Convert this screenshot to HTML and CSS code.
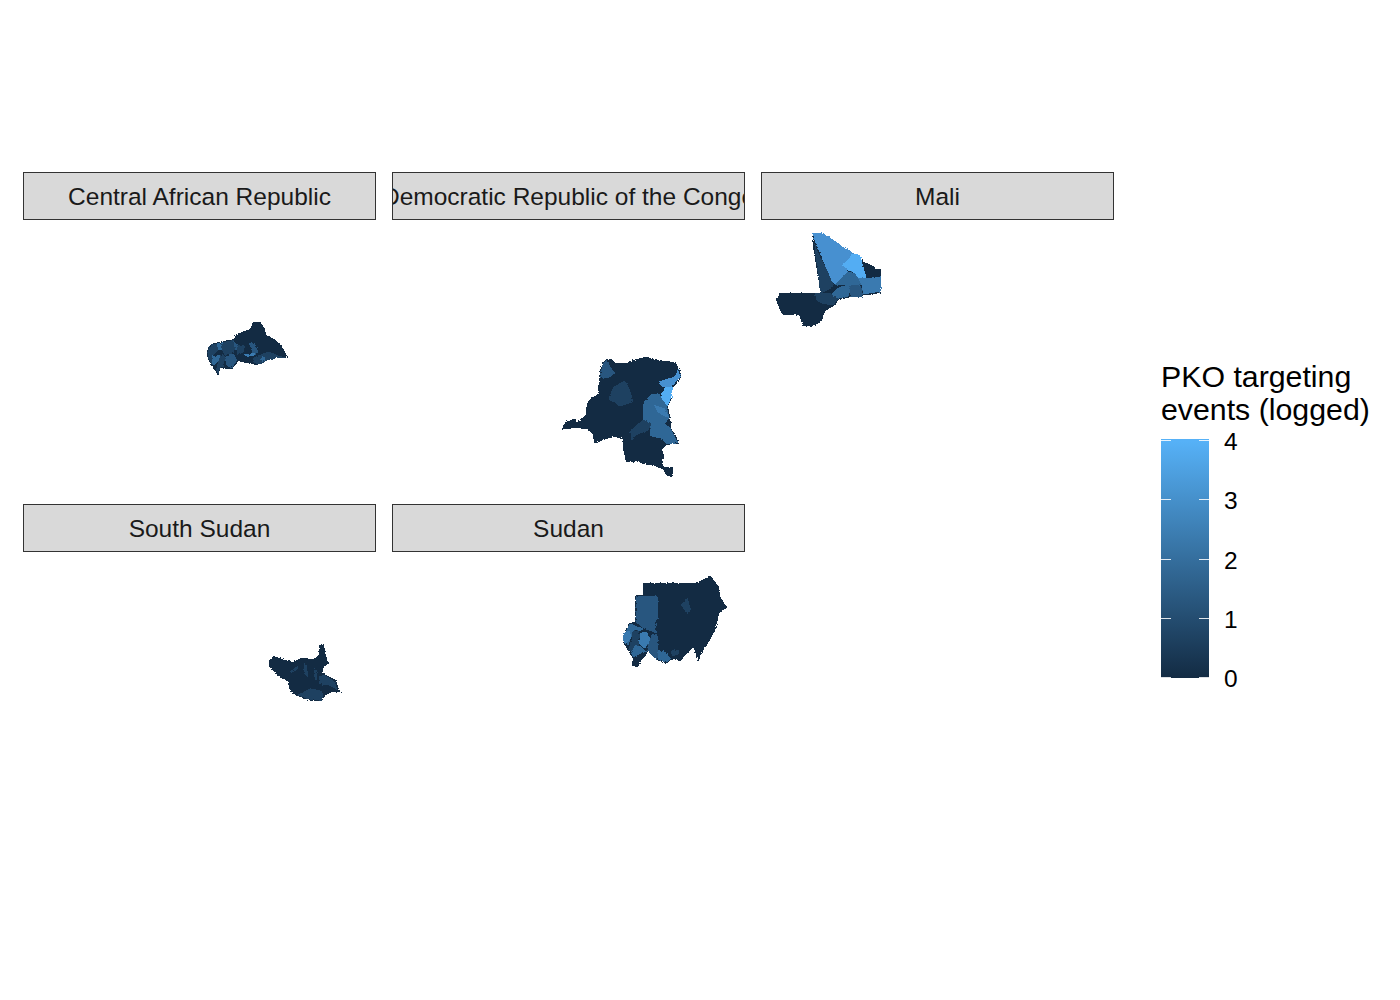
FILE: index.html
```html
<!DOCTYPE html>
<html lang="en">
<head>
<meta charset="utf-8">
<title>PKO targeting events</title>
<link rel="stylesheet" href="styles.css">
</head>
<body>
<svg class="defs" aria-hidden="true"><defs>
<filter id="rough" color-interpolation-filters="sRGB" x="-5%" y="-5%" width="110%" height="110%">
<feTurbulence type="fractalNoise" baseFrequency="0.3" numOctaves="1" seed="4" result="n"/>
<feDisplacementMap in="SourceGraphic" in2="n" scale="9" xChannelSelector="R" yChannelSelector="G"/>
</filter>
</defs></svg>
<main class="plot">
<section class="facets">

<figure class="facet">
<figcaption class="strip"><span>Central African Republic</span></figcaption>
<svg class="panel" viewBox="-531 -285 1059 804"><g class="map">
<polygon class="v0" points="20,112 30,88 60,80 103,72 108,58 150,42 160,22 182,22 194,42 200,60 228,76 248,98 266,130 232,128 205,135 170,150 145,145 115,139 97,162 60,160 55,184 48,170 33,152 23,130"/>
<polygon class="v1" points="22,112 32,88 50,86 55,105 35,125 38,152 25,130"/>
<polygon class="v2" points="50,86 68,82 65,105 55,105"/>
<polygon class="v1" points="68,82 100,75 108,90 100,115 75,120 65,105"/>
<polygon class="v1b" points="100,78 112,88 128,100 115,108 105,105"/>
<polygon class="v2" points="35,125 60,120 62,135 42,150 38,150"/>
<polygon class="v1b" points="75,125 100,115 112,135 95,160 78,150"/>
<polygon class="v1" points="60,120 75,120 72,155 60,158 55,180 48,165"/>
<polygon class="v1b" points="148,85 165,85 175,112 162,118 155,105"/>
<polygon class="v2b" points="132,118 165,114 165,121 140,126"/>
<polygon class="v1" points="165,125 205,110 262,130 230,130 205,135 172,150 160,140"/>
<polygon class="v2" points="180,130 195,125 195,138 180,140"/>
<polygon class="v1" points="112,90 135,92 130,112 112,120"/>
</g></svg>
</figure>

<figure class="facet">
<figcaption class="strip"><span>Democratic Republic of the Congo</span></figcaption>
<svg class="panel" viewBox="-474 -390 1059 804"><g class="map">
<polygon class="v0" points="36,238 45,215 60,213 65,206 78,206 80,220 90,208 108,195 110,165 120,146 145,132 146,85 156,40 170,26 182,26 197,40 232,40 240,33 285,20 330,30 367,36 382,43 385,73 388,53 394,80 377,105 367,115 367,140 354,170 360,200 364,235 377,255 387,282 352,284 337,297 342,320 337,340 342,350 370,353 370,380 350,377 338,357 310,347 280,342 260,334 228,337 220,300 218,267 190,260 170,267 133,280 128,252 113,237 80,234"/>
<polygon class="v1b" points="148,85 158,40 170,32 195,70 175,85"/>
<polygon class="v1" points="175,145 190,110 225,92 240,120 250,155 210,170 190,155"/>
<polygon class="v4" points="325,155 345,110 365,110 365,140 352,170"/>
<polygon class="v3" points="325,95 375,78 385,55 392,80 365,110 335,110"/>
<polygon class="v2" points="278,165 300,135 325,130 352,170 358,205 345,220 300,218 278,210"/>
<polygon class="v2b" points="312,165 345,175 358,205 325,190"/>
<polygon class="v2" points="300,218 345,220 362,235 385,280 350,282 330,265 300,258"/>
<polygon class="v1" points="240,245 260,225 278,210 300,218 298,240 260,255 245,272"/>
</g></svg>
</figure>

<figure class="facet">
<figcaption class="strip"><span>Mali</span></figcaption>
<svg class="panel" viewBox="3 -15 1059 804"><g class="map">
<polygon class="v0" points="158,25 190,25 280,85 300,90 310,110 340,123 345,133 364,133 364,202 345,207 310,210 305,217 270,217 237,224 222,242 197,257 182,292 155,305 128,302 118,272 108,268 68,270 53,240 48,222 60,203 180,203 178,180 160,70"/>
<polygon class="v3" points="158,25 190,25 280,85 250,120 265,140 225,180 215,170 165,50"/>
<polygon class="v1" points="162,55 222,180 212,190 195,200 180,200 178,180"/>
<polygon class="v4" points="280,85 300,90 310,125 320,160 295,160 285,145 265,138 248,120"/>
<polygon class="v2b" points="295,160 320,160 362,155 362,200 310,208 305,180"/>
<polygon class="v2" points="265,140 285,145 295,160 305,180 270,182 245,180 225,180"/>
<polygon class="v1b" points="270,182 300,178 310,208 305,215 270,215"/>
<polygon class="v2" points="225,195 245,182 270,182 268,212 235,222 212,212"/>
<polygon class="v1" points="165,205 210,205 235,222 220,240 190,238 170,228"/>
<polygon class="v0" points="212,190 228,182 225,198 212,200"/>
</g></svg>
</figure>

<figure class="facet">
<figcaption class="strip"><span>South Sudan</span></figcaption>
<svg class="panel" viewBox="-711 -264 1059 804"><g class="map">
<polygon class="v0" points="28,62 40,48 70,58 95,66 125,53 160,58 176,46 178,16 192,13 197,45 207,70 190,82 190,100 227,120 237,148 247,156 215,157 195,167 185,184 150,182 110,167 90,154 83,125 53,107 28,80"/>
<polygon class="v1" points="178,108 195,105 225,125 232,150 205,135 178,133"/>
<polygon class="v1" points="110,165 150,145 185,152 190,170 185,182 150,180"/>
<polygon class="v1" points="130,72 140,75 145,112 135,105"/>
<polygon class="v1" points="90,95 112,78 115,85 95,98"/>
<polygon class="v1" points="162,82 170,90 170,120 162,110"/>
</g></svg>
</figure>

<figure class="facet">
<figcaption class="strip"><span>Sudan</span></figcaption>
<svg class="panel" viewBox="-669 -54 1059 804"><g class="map">
<polygon class="v0" points="84,38 238,38 255,36 285,16 312,50 317,85 337,112 312,130 302,175 282,215 257,255 250,277 235,232 215,252 195,274 175,267 155,280 130,272 100,247 82,267 68,292 51,287 53,265 38,240 23,215 28,190 43,158 61,156 61,76 84,76"/>
<polygon class="v1b" points="63,78 128,78 130,145 122,150 125,190 85,175 63,158"/>
<polygon class="v1" points="198,105 218,85 228,120 215,130"/>
<polygon class="v2" points="45,160 85,175 75,185 60,180 48,205 40,225 25,215 30,190"/>
<polygon class="v1" points="50,185 72,182 75,205 50,210"/>
<polygon class="v1" points="48,210 70,205 72,225 55,250 40,240"/>
<polygon class="v2b" points="25,190 45,180 48,205 35,220 25,215"/>
<polygon class="v2b" points="75,190 95,185 108,210 100,225 85,235 72,222"/>
<polygon class="v2" points="60,225 75,228 95,245 80,250 55,262 48,250"/>
<polygon class="v1b" points="110,192 128,192 128,240 135,270 115,262 100,245 100,225"/>
<polygon class="v2" points="128,240 150,245 168,265 155,278 130,270"/>
<polygon class="v1" points="165,242 192,240 190,255 172,258"/>
</g></svg>
</figure>

</section>
<aside class="legend">
<h2 class="legend-title">PKO targeting<br>events (logged)</h2>
<div class="scale">
<div class="bar">
<div class="ticks"><i></i><i></i><i></i><i></i><i></i></div>
</div>
<div class="labels"><span>4</span><span>3</span><span>2</span><span>1</span><span>0</span></div>
</div>
</aside>
</main>
</body>
</html>
```
FILE: styles.css
```css
html, body { margin: 0; background: #fff; }
body { font-family: "Liberation Sans", Arial, sans-serif; }
.defs { display: block; width: 0; height: 0; }
.plot { display: flex; width: 1400px; height: 1000px; padding: 172px 0 0 23px; box-sizing: border-box; }
.facets { display: grid; grid-template-columns: repeat(3, 353px); column-gap: 16px; row-gap: 16px; align-content: start; }
.facet { margin: 0; }
.strip { display: flex; justify-content: center; align-items: center; box-sizing: border-box; height: 48px; padding-top: 2px; background: #d9d9d9; border: 1px solid #333; color: #1a1a1a; font-size: 24.5px; white-space: nowrap; overflow: hidden; }
.strip span { flex: none; }
.panel { display: block; width: 353px; height: 268px; }
.map { filter: url(#rough); shape-rendering: crispEdges; }
.v0 { fill: #132b43; }
.v1 { fill: #1e4161; }
.v1b { fill: #28567f; }
.v2 { fill: #2f6796; }
.v2b { fill: #3a7ab0; }
.v3 { fill: #4790d0; }
.v4 { fill: #53adf3; }
.legend { margin-left: 47px; padding-top: 188px; }
.legend-title { margin: 0 0 13px; font-size: 30.3px; font-weight: 400; line-height: 33px; color: #000; white-space: nowrap; }
.scale { display: flex; align-items: flex-start; }
.bar { position: relative; width: 48px; height: 239px; background: linear-gradient(to top, #132b43, #56b1f7 99%); }
.ticks { position: absolute; inset: 1px 0 0; display: flex; flex-direction: column; justify-content: space-between; }
.ticks i { display: block; height: 1px; background: linear-gradient(to right, rgba(255,255,255,.85) 10px, transparent 10px, transparent 38px, rgba(255,255,255,.85) 38px); }
.labels { display: flex; flex-direction: column; justify-content: space-between; height: 265px; margin: -11px 0 0 15px; font-size: 24.5px; line-height: 28px; color: #000; }
```
